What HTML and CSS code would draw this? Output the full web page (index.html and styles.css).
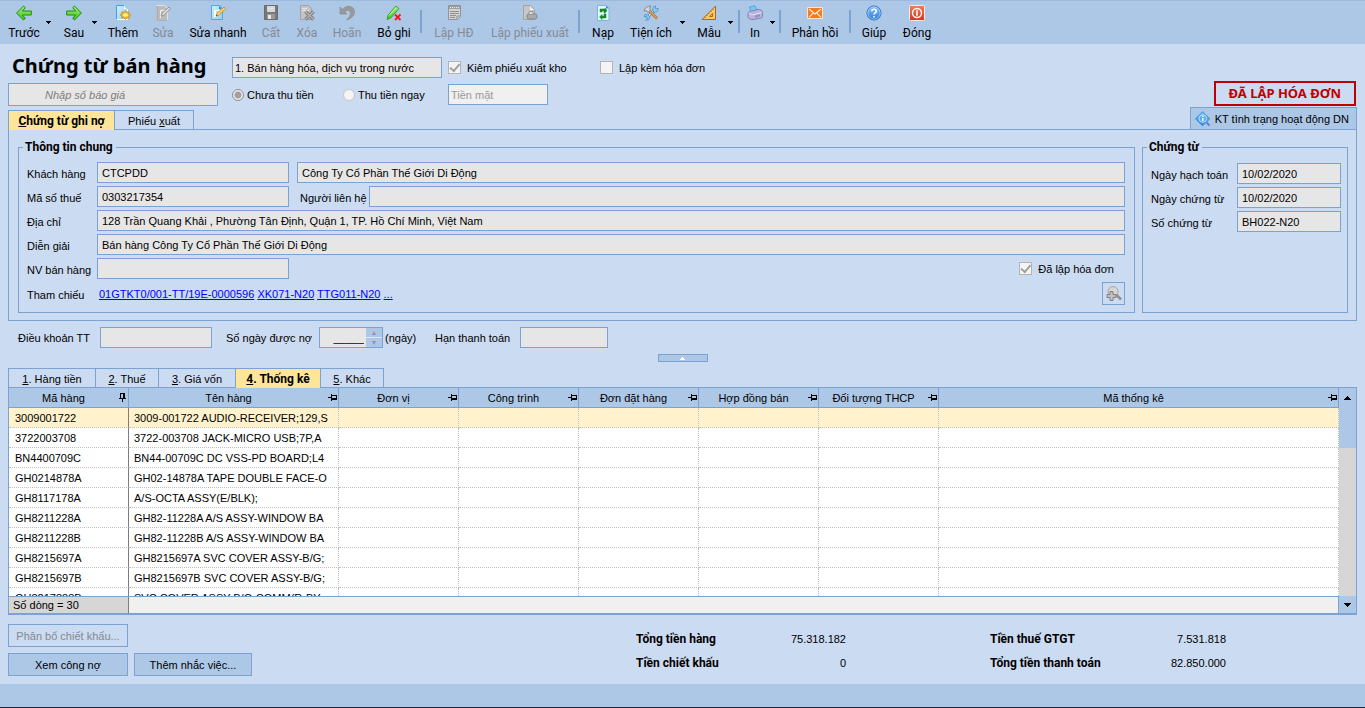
FILE: index.html
```html
<!DOCTYPE html>
<html lang="vi">
<head>
<meta charset="utf-8">
<title>Chứng từ bán hàng</title>
<link rel="stylesheet" href="styles.css">
</head>
<body>
<svg class="defs" aria-hidden="true">
  <defs>
    <linearGradient id="g-green" x1="0" y1="0" x2="0" y2="1"><stop offset="0" stop-color="#a6ec7c"/><stop offset="1" stop-color="#3fc41c"/></linearGradient>
    <linearGradient id="g-blue" x1="0" y1="0" x2="0" y2="1"><stop offset="0" stop-color="#8cc4fa"/><stop offset="1" stop-color="#2a7be0"/></linearGradient>
    <linearGradient id="g-red" x1="0" y1="0" x2="0" y2="1"><stop offset="0" stop-color="#f08058"/><stop offset="1" stop-color="#d8341c"/></linearGradient>
    <linearGradient id="g-page" x1="0" y1="0" x2="1" y2="1"><stop offset="0" stop-color="#d4effd"/><stop offset="1" stop-color="#8fd0f5"/></linearGradient>
    <symbol id="pin" viewBox="0 0 9 7"><path d="M0 3h3V0h1v1h5v5H4v1H3V4H0zM4 2v2h4V2z" fill="#000" fill-rule="evenodd"/></symbol>
    <symbol id="caret" viewBox="0 0 5 3"><path d="M0 0h5v1H4v1H3v1H2V2H1V1H0z" fill="#000"/></symbol>
  </defs>
</svg>

<nav class="toolbar" aria-label="Thanh công cụ">
  <button class="tool"><svg viewBox="0 0 16 16"><path d="M7.500 1 .6 8l6.900 7 1.800-1.700L6.300 10h9V6H6.300l3-3.300z" fill="url(#g-green)" stroke="#159010" stroke-linejoin="round"/></svg><span>Trước</span></button>
  <button class="drop" aria-label="Mở danh sách Trước"><svg><use href="#caret"/></svg></button>
  <button class="tool"><svg viewBox="0 0 16 16"><path d="m8.500 1 6.900 7-6.900 7-1.800-1.700L9.700 10h-9V6h9l-3-3.300z" fill="url(#g-green)" stroke="#159010" stroke-linejoin="round"/></svg><span>Sau</span></button>
  <button class="drop" aria-label="Mở danh sách Sau"><svg><use href="#caret"/></svg></button>
  <button class="tool"><svg viewBox="0 0 16 16"><path d="M1.500.5h8l3 3v11h-11z" fill="url(#g-page)" stroke="#fff"/><path d="M1.500 14.500V.5h7.500l3.500 3.500" fill="none" stroke="#3f9fe0"/><path d="M9 1v3h3z" fill="#fff"/><path d="m10.500 5.500 1.200 1.700 2-.4.1 1.700 2 1.500-1.600 1.400-.1 1.800-2.100-.2-1.500 1.400-1.500-1.400-2.200.2-.1-1.800L5.200 10l1.500-1.500.1-1.700 2.300.4z" fill="#e8b828" stroke="#b88418" stroke-width=".7"/><ellipse cx="10.500" cy="10" rx="2.500" ry="1.800" fill="#fff29c"/></svg><span>Thêm</span></button>
  <button class="tool" disabled><svg viewBox="0 0 16 16"><path d="M1.500.5h8l3 3v11h-11z" fill="#bcbcbc" stroke="#e2e2e2"/><path d="M2 1v14h10" fill="none" stroke="#9a9a9a"/><path d="M5 5h5v1H6v7H5z" fill="#eee"/><path d="m6 11 1.300-3L14 2l1.500 1.600L8.800 10.500z" fill="#d8d8d8" stroke="#8a8a8a" stroke-width=".8"/></svg><span>Sửa</span></button>
  <button class="tool"><svg viewBox="0 0 16 16"><path d="M1.500.5h8l3 3v11h-11z" fill="url(#g-page)" stroke="#49a9ec"/><path d="M9 1v3h3z" fill="#1d86dc"/><path d="M4 5h6v1H6v6H4z" fill="#fff"/><path d="m6 11 1.300-3L14 2l1.500 1.600L8.800 10.500z" fill="#fcd35a" stroke="#c88a20" stroke-width=".8"/><path d="m6 11 .7-1.500.9.9z" fill="#333"/></svg><span>Sửa nhanh</span></button>
  <button class="tool" disabled><svg viewBox="0 0 16 16"><path d="M1.500.5h13v14h-13z" fill="#777" stroke="#6c6c6c"/><path d="M4 1h8v6H4z" fill="#d8d8d8"/><path d="M4 9h8v5H4z" fill="#999"/><path d="M5 10h3v4H5zM5 3h6v1H5z" fill="#e6e6e6"/></svg><span>Cất</span></button>
  <button class="tool" disabled><svg viewBox="0 0 16 16"><path d="M1.500.5h8l3 3v11h-11z" fill="#c4c4c4" stroke="#a2a2a2"/><path d="M3 3h5v1H3zM3 5h7v1H3z" fill="#e8e8e8"/><path d="m6.500 6.500 8 8m0-8-8 8" stroke="#7c7c7c" stroke-width="3.400"/><path d="m6.500 6.500 8 8m0-8-8 8" stroke="#b4b4b4" stroke-width="1.500"/></svg><span>Xóa</span></button>
  <button class="tool" disabled><svg viewBox="0 0 16 16"><path d="M1 2v7h7L5.800 6.800C8 4.600 11.500 5 11.500 8.200c0 2.300-1.500 4.200-4 6.800 4-1 8-3.900 8-8 0-6-7.500-7.800-12-2.700z" fill="#999" stroke="#888" stroke-width=".6"/></svg><span>Hoãn</span></button>
  <button class="tool"><svg viewBox="0 0 16 16"><path d="M1 14.500 2.200 10 10 1l3 2.500-8 9.300z" fill="url(#g-green)" stroke="#2aa018" stroke-width=".9"/><path d="M3 10.500 10.200 2.500" stroke="#d6f8bc"/><path d="m9 9.500 5.500 5.500m0-5.500L9 15" stroke="#f01818" stroke-width="1.800"/></svg><span>Bỏ ghi</span></button>
  <i class="sep"></i>
  <button class="tool" disabled><svg viewBox="0 0 16 16"><path d="M2.500.5h12v11l-3 3h-9z" fill="#d4d4d4" stroke="#929292"/><path d="M3 1h11v3H3z" fill="#a0a0a0"/><path d="M4 6.500h9M4 8.500h9M4 10.500h6M4 12.500h5" stroke="#909090"/><path d="M4 2.500h9" stroke="#eee" stroke-dasharray="1"/><path d="M11 14v-3h3" fill="none" stroke="#909090"/></svg><span>Lập HĐ</span></button>
  <button class="tool" disabled><svg viewBox="0 0 16 16"><path d="M1.500.5h7l4 4v10h-11z" fill="#c6c6c6" stroke="#a4a4a4"/><path d="M8 1v4h4z" fill="#eee"/><rect x="5" y="9" width="10" height="5" rx="2" fill="#aaa" stroke="#858585"/><path d="M7 9V6.500h4V9" fill="#ddd" stroke="#888" stroke-width=".8"/></svg><span>Lập phiếu xuất</span></button>
  <i class="sep"></i>
  <button class="tool"><svg viewBox="0 0 16 16"><path d="M2.500.5H11l3 3v12H2.500z" fill="#e3f4fd" stroke="#7fb4dc"/><path d="M11 .5v3h3z" fill="#368cdc"/><path d="M5 7V4h5V3l2 2.500L10 8H9V6H7v1zM11 9v4H7v1.500L4.500 12 7 9.500V11h2V9z" fill="#0d8c24" stroke="#0d8c24" stroke-width=".5"/></svg><span>Nạp</span></button>
  <button class="tool"><svg viewBox="0 0 16 16"><path d="M3 13.500 11.500 5" stroke="#438fce" stroke-width="3"/><path d="M3 13.500 11.500 5" stroke="#c6ebff" stroke-width="1.300"/><path d="M10 6V2.500L12.500.8V3.500h3L14 6.500l-2.500 1zM5 10l2 2-1.500 3-3 .2L5 13l-2-1.500H1L2 9.500z" fill="#8cc8ee" stroke="#438fce" stroke-width=".7"/><path d="m6 5.500 8 8" stroke="#b6762e" stroke-width="2.800"/><path d="m6.500 6 7 7" stroke="#f2c684"/><path d="M1 6C1.500 3 4 1 8 1L6.500 3l1 2L5 7.500 3.700 5.700z" fill="#d4d8dc" stroke="#7a7a7a" stroke-width=".8"/></svg><span>Tiện ích</span></button>
  <button class="drop" aria-label="Mở danh sách Tiện ích"><svg><use href="#caret"/></svg></button>
  <button class="tool"><svg viewBox="0 0 16 16"><path d="M1 14.500 14.500 1v13.500zM8.500 11.500h3V8.500z" fill="#f9c75e" fill-rule="evenodd" stroke="#a96c1e"/><path d="m3.500 12 .9.900M5.500 10l.9.900M7.500 8l.9.900M9.500 6l.9.900M11.500 4l.9.900" stroke="#7c4c10" stroke-width=".8"/></svg><span>Mẫu</span></button>
  <button class="drop" aria-label="Mở danh sách Mẫu"><svg><use href="#caret"/></svg></button>
  <i class="sep"></i>
  <button class="tool"><svg viewBox="0 0 16 16"><path d="M3.500 6.500 2.500 2 8 .8 10.500 6z" fill="#74c9f4" stroke="#3c98d4" stroke-width=".7"/><path d="M1 8.500C1 7 3 6 5 6l6-1.500c2.500-.3 4.500 1 4.500 3.500v3.500c0 1-1 1.500-2 1.500L6 14.500c-3 0-5-1-5-3z" fill="#b9b5dc" stroke="#7d79b2" stroke-width=".9"/><path d="M2 8.500C4 10 6 10 8 9.300l6.500-1.800" fill="none" stroke="#e5e3f6"/><path d="m8 10.500 5-1.200v2L8 12.500z" fill="#918dc4"/></svg><span>In</span></button>
  <button class="drop" aria-label="Mở danh sách In"><svg><use href="#caret"/></svg></button>
  <i class="sep"></i>
  <button class="tool"><svg viewBox="0 0 16 16"><path d="M.5 2.500h15v11H.5z" fill="#f47c20" stroke="#ffe3c4"/><path d="m2 4 6 5 6-5M2 12.500 6.300 7.800M14 12.500 9.700 7.800" fill="none" stroke="#fff3e2" stroke-width="1.100"/></svg><span>Phản hồi</span></button>
  <i class="sep"></i>
  <button class="tool"><svg viewBox="0 0 16 16"><circle cx="8" cy="8" r="7" fill="url(#g-blue)" stroke="#1c69c4"/><circle cx="8" cy="8" r="6.200" fill="none" stroke="#b9dcff" stroke-width=".7"/><path d="M5.800 6.200C5.800 3.600 10.300 3.600 10.300 6.200 10.300 7.800 8 7.800 8 9.600M8 11v1.600" fill="none" stroke="#fff" stroke-width="1.600"/></svg><span>Giúp</span></button>
  <button class="tool"><svg viewBox="0 0 16 16"><rect x=".5" y=".5" width="15" height="15" rx="1" fill="url(#g-red)" stroke="#ffe9e0"/><circle cx="8" cy="8" r="4.500" fill="none" stroke="#fff" stroke-width="1.400"/><path d="M8 5.200v5.600" stroke="#fff" stroke-width="1.600"/></svg><span>Đóng</span></button>
</nav>

<main class="page">
  <header class="head">
    <div class="head-left">
      <h1>Chứng từ bán hàng</h1>
      <input class="field quote" type="text" placeholder="Nhập số báo giá" aria-label="Số báo giá" readonly>
    </div>
    <div class="head-mid">
      <div class="kind">
        <select class="field" aria-label="Loại chứng từ"><option>1. Bán hàng hóa, dịch vụ trong nước</option></select>
        <label class="tick"><input type="checkbox" checked>Kiêm phiếu xuất kho</label>
        <label class="tick"><input type="checkbox">Lập kèm hóa đơn</label>
      </div>
      <div class="pay">
        <label class="tick dot"><input type="radio" name="pay" checked>Chưa thu tiền</label>
        <label class="tick dot"><input type="radio" name="pay">Thu tiền ngay</label>
        <select class="field cash" aria-label="Hình thức thanh toán"><option>Tiền mặt</option></select>
      </div>
    </div>
    <strong class="badge">ĐÃ LẬP HÓA ĐƠN</strong>
  </header>

  <div class="tab-row">
    <div class="tabs" role="tablist">
      <button class="tab active wide" role="tab"><u>C</u>hứng từ ghi nợ</button>
      <button class="tab mid" role="tab">Phiếu <u>x</u>uất</button>
    </div>
    <button class="check-dn"><svg viewBox="0 0 16 16"><path d="m7.500.8 7.200 7-7.200 7L.5 7.800z" fill="url(#g-blue)" stroke="#2e93da"/><circle cx="7.800" cy="7.600" r="3.800" fill="#58b0ee" stroke="#b8e2ff"/><path d="M7.800 7v3M7.800 4.800v1.200" stroke="#fff" stroke-width="1.500"/><path d="m11.500 11.500 3 3" stroke="#6f77d8" stroke-width="2"/></svg>KT tình trạng hoạt động DN</button>
  </div>

  <section class="panel">
    <fieldset class="general">
      <legend>Thông tin chung</legend>
      <div class="row"><label for="kh">Khách hàng</label><input id="kh" class="field code" value="CTCPDD" readonly><input class="field grow" value="Công Ty Cổ Phần Thế Giới Di Động" aria-label="Tên khách hàng" readonly></div>
      <div class="row"><label for="mst">Mã số thuế</label><input id="mst" class="field code" value="0303217354" readonly><label for="nlh" class="contact">Người liên hệ</label><input id="nlh" class="field grow" readonly></div>
      <div class="row"><label for="dc">Địa chỉ</label><input id="dc" class="field grow" value="128 Trần Quang Khải , Phường Tân Định, Quận 1, TP. Hồ Chí Minh, Việt Nam" readonly></div>
      <div class="row"><label for="dg">Diễn giải</label><input id="dg" class="field grow" value="Bán hàng Công Ty Cổ Phần Thế Giới Di Động" readonly></div>
      <div class="row"><label for="nv">NV bán hàng</label><input id="nv" class="field code" readonly><label class="tick issued"><input type="checkbox" checked>Đã lập hóa đơn</label></div>
      <div class="row"><span class="cap">Tham chiếu</span><span class="links"><a href="#">01GTKT0/001-TT/19E-0000596</a> <a href="#">XK071-N20</a> <a href="#">TTG011-N20</a> <a href="#">...</a></span>
        <button class="find" aria-label="Tìm chứng từ tham chiếu"><svg viewBox="0 0 16 16"><circle cx="7" cy="5.500" r="5" fill="#d6d6d6" stroke="#a4a4a4"/><path d="m10.500 9 4.500 4.500" stroke="#909090" stroke-width="2.600"/><path d="M4 5.500h3v3h3v3H7v3H4v-3H1v-3h3z" fill="#c0c0c0" stroke="#808080"/></svg></button></div>
    </fieldset>
    <fieldset class="voucher">
      <legend>Chứng từ</legend>
      <div class="row"><label for="nht">Ngày hạch toán</label><input id="nht" class="field grow" value="10/02/2020" readonly></div>
      <div class="row"><label for="nct">Ngày chứng từ</label><input id="nct" class="field grow" value="10/02/2020" readonly></div>
      <div class="row"><label for="sct">Số chứng từ</label><input id="sct" class="field grow" value="BH022-N20" readonly></div>
    </fieldset>
  </section>

  <div class="terms">
    <label for="dk">Điều khoản TT</label><input id="dk" class="field term-code" readonly>
    <label for="sn">Số ngày được nợ</label>
    <span class="spin"><input id="sn" value="_____" readonly><span class="steps"><button aria-label="Tăng">▴</button><button aria-label="Giảm">▾</button></span></span>
    <span class="unit">(ngày)</span>
    <label for="ht">Hạn thanh toán</label><input id="ht" class="field due" readonly>
  </div>
  <button class="collapse" aria-label="Thu gọn"><svg viewBox="0 0 5 3"><path d="M2 0h1v1h1v1h1v1H0V2h1V1h1z" fill="#fff"/></svg></button>

  <div class="tabs lower" role="tablist">
    <button class="tab t1" role="tab"><u>1</u>. Hàng tiền</button>
    <button class="tab t2" role="tab"><u>2</u>. Thuế</button>
    <button class="tab t3" role="tab"><u>3</u>. Giá vốn</button>
    <button class="tab t4 active" role="tab"><u>4</u>. Thống kê</button>
    <button class="tab t2" role="tab"><u>5</u>. Khác</button>
  </div>

  <section class="grid">
    <div class="grid-main">
      <div class="grid-view">
        <table>
          <colgroup><col class="c-code"><col class="c-name"><col class="c-std"><col class="c-std"><col class="c-std"><col class="c-std"><col class="c-std"><col></colgroup>
          <thead><tr>
            <th><div><span>Mã hàng</span><svg class="pin down"><use href="#pin"/></svg></div></th>
            <th><div><span>Tên hàng</span><svg class="pin"><use href="#pin"/></svg></div></th>
            <th><div><span>Đơn vị</span><svg class="pin"><use href="#pin"/></svg></div></th>
            <th><div><span>Công trình</span><svg class="pin"><use href="#pin"/></svg></div></th>
            <th><div><span>Đơn đặt hàng</span><svg class="pin"><use href="#pin"/></svg></div></th>
            <th><div><span>Hợp đồng bán</span><svg class="pin"><use href="#pin"/></svg></div></th>
            <th><div><span>Đối tượng THCP</span><svg class="pin"><use href="#pin"/></svg></div></th>
            <th><div><span>Mã thống kê</span><svg class="pin"><use href="#pin"/></svg></div></th>
          </tr></thead>
          <tbody>
            <tr class="current"><td>3009001722</td><td>3009-001722 AUDIO-RECEIVER;129,S</td><td></td><td></td><td></td><td></td><td></td><td></td></tr>
            <tr><td>3722003708</td><td>3722-003708 JACK-MICRO USB;7P,A</td><td></td><td></td><td></td><td></td><td></td><td></td></tr>
            <tr><td>BN4400709C</td><td>BN44-00709C DC VSS-PD BOARD;L4</td><td></td><td></td><td></td><td></td><td></td><td></td></tr>
            <tr><td>GH0214878A</td><td>GH02-14878A TAPE DOUBLE FACE-O</td><td></td><td></td><td></td><td></td><td></td><td></td></tr>
            <tr><td>GH8117178A</td><td>A/S-OCTA ASSY(E/BLK);</td><td></td><td></td><td></td><td></td><td></td><td></td></tr>
            <tr><td>GH8211228A</td><td>GH82-11228A A/S ASSY-WINDOW BA</td><td></td><td></td><td></td><td></td><td></td><td></td></tr>
            <tr><td>GH8211228B</td><td>GH82-11228B A/S ASSY-WINDOW BA</td><td></td><td></td><td></td><td></td><td></td><td></td></tr>
            <tr><td>GH8215697A</td><td>GH8215697A SVC COVER ASSY-B/G;</td><td></td><td></td><td></td><td></td><td></td><td></td></tr>
            <tr><td>GH8215697B</td><td>GH8215697B SVC COVER ASSY-B/G;</td><td></td><td></td><td></td><td></td><td></td><td></td></tr>
            <tr><td>GH8217888B</td><td>SVC COVER ASSY-B/G-COMM(R-BY</td><td></td><td></td><td></td><td></td><td></td><td></td></tr>
          </tbody>
        </table>
      </div>
      <div class="summary"><span>Số dòng = 30</span></div>
    </div>
    <div class="scroll">
      <button aria-label="Cuộn lên"><svg viewBox="0 0 7 4"><path d="M3 0h1v1h1v1h1v1h1v1H0V3h1V2h1V1h1z"/></svg></button>
      <div class="thumb"></div>
      <button class="last" aria-label="Cuộn xuống"><svg viewBox="0 0 7 4"><path d="M0 0h7v1H6v1H5v1H4v1H3V3H2V2H1V1H0z"/></svg></button>
    </div>
  </section>

  <section class="bottom">
    <div class="actions">
      <button class="act" disabled>Phân bổ chiết khấu...</button>
      <button class="act first">Xem công nợ</button>
      <button class="act">Thêm nhắc việc...</button>
    </div>
    <dl class="totals">
      <dt>Tổng tiền hàng</dt><dd>75.318.182</dd><dt class="second">Tiền thuế GTGT</dt><dd>7.531.818</dd>
      <dt>Tiền chiết khấu</dt><dd>0</dd><dt class="second">Tổng tiền thanh toán</dt><dd>82.850.000</dd>
    </dl>
  </section>
</main>
<footer class="status"></footer>
</body>
</html>
```
FILE: styles.css
```css
:root {
  --bg: #cbdbf1;
  --bar: #adc7e7;
  --line: #7ba2d1;
  --field: #e6e6e6;
  --yellow: #ffe599;
}

* { box-sizing: border-box; }

body {
  margin: 0;
  height: 100vh;
  min-height: 620px;
  display: flex;
  flex-direction: column;
  background: var(--bg);
  color: #000;
  font: 11px/16px "Liberation Sans", Arial, sans-serif;
}

button, input, select { font: inherit; color: inherit; margin: 0; }
button { padding: 0; border: 0; background: none; white-space: nowrap; }
label { white-space: nowrap; }
.defs { position: absolute; width: 0; height: 0; }

/* Toolbar */
.toolbar {
  display: grid;
  grid-template-columns: 40px 14px 32px 14px 38px 42px 68px 38px 34px 46px 48px 6px 60px 92px 6px 42px 54px 14px 34px 10px 6px 26px 9px 6px 64px 6px 42px 44px;
  flex: none;
  height: 44px;
  padding: 4px 4px 3px;
  border-top: 1px solid #9bbadd;
  background: var(--bar);
  font-family: Roboto, "Open Sans", sans-serif;
  font-size: 12px;
}
.tool { display: flex; flex-direction: column; align-items: center; gap: 4px; }
.tool svg { width: 16px; height: 16px; }
.tool:disabled { color: #858b94; }
.drop { display: flex; padding: 16px 0 0 2px; }
.drop svg { width: 5px; height: 3px; }
.sep { width: 2px; height: 23px; margin: 5px 0 0 2px; background: var(--line); }

/* Main area */
.page { display: flex; flex-direction: column; flex: 1; min-height: 0; padding: 0 8px; }

.field {
  height: 21px;
  min-width: 0;
  padding: 0 5px 0 4px;
  border: 1px solid var(--line);
  border-radius: 0;
  background: var(--field);
  outline: 0;
  appearance: none;
}
select.field { padding: 0 2px; }
.grow { flex: 1; }

.head { display: flex; align-items: flex-end; padding: 10px 1px 1px 0; }
.head-left { width: 210px; margin-right: 14px; }
h1 {
  margin: 0;
  padding: 0 0 5px 4px;
  font: bold 20px/24px "Noto Sans", "Open Sans", sans-serif;
  white-space: nowrap;
}
.quote { display: block; width: 100%; height: 23px; padding-left: 36px; font-style: italic; }
.quote::placeholder { color: #7d7d7d; opacity: 1; }
.head-mid { display: flex; flex-direction: column; gap: 6px; flex: 1; padding-bottom: 1px; }
.kind, .pay { display: grid; align-items: center; }
.kind { grid-template-columns: 210px 146px auto; column-gap: 6px; }
.pay { grid-template-columns: 105px 99px 100px; column-gap: 6px; }
.cash { background: #f0f0f0; color: #9a9a9a; }

.tick { display: flex; align-items: center; gap: 6px; }
.tick input {
  flex: none;
  display: grid;
  place-items: center;
  appearance: none;
  width: 13px;
  height: 13px;
  border: 1px solid #b4b4b4;
  background: #f4f4f4;
}
.tick input[type="checkbox"]:checked::before {
  content: "";
  width: 4px;
  height: 8px;
  border: solid #a0a0a0;
  border-width: 0 2px 2px 0;
  transform: rotate(40deg) translate(-1px, -1px);
}
.dot { gap: 3px; }
.dot input { width: 12px; height: 12px; border-radius: 50%; border-color: #c8c8c8; }
.dot input:checked { border-color: #8c8c8c; background: radial-gradient(#a0a0a0 0 3px, #eee 4px); }

.badge {
  padding: 0 13px;
  border: 2px solid #c00000;
  color: #c00000;
  font: bold 13px/21px "Noto Sans", "Open Sans", sans-serif;
  white-space: nowrap;
}

/* Tabs */
.tab-row { position: relative; display: flex; justify-content: space-between; align-items: flex-end; margin-bottom: -1px; }
.tabs { display: flex; }
.tab { height: 20px; margin-right: -1px; border: 1px solid var(--line); border-bottom: 0; }
.tab.active { background: var(--yellow); font: bold 12px/16px Roboto, sans-serif; }
.wide { width: 107px; }
.mid { width: 80px; }
.t1 { width: 88px; }
.t2 { width: 64px; }
.t3 { width: 78px; }
.t4 { width: 86px; }
.check-dn {
  display: flex;
  align-items: center;
  gap: 4px;
  height: 22px;
  margin-bottom: 1px;
  padding: 0 7px 0 4px;
  border: 1px solid var(--line);
  border-bottom: 0;
  background: var(--bar);
}
.check-dn svg { width: 16px; height: 16px; }

/* Document panel */
.panel {
  display: flex;
  gap: 7px;
  padding: 9px 8px 7px 9px;
  border: 1px solid var(--line);
}
fieldset {
  display: flex;
  flex-direction: column;
  gap: 3px;
  min-width: 0;
  margin: 0;
  padding: 7px 9px 7px 8px;
  border: 1px solid var(--line);
}
legend { margin-left: -4px; padding: 0 3px 0 2px; font: bold 12px/16px Roboto, sans-serif; }
.general { flex: 1; }
.voucher { width: 206px; padding: 8px 6px 7px 8px; }
.row { display: flex; align-items: center; }
.row > label:first-child, .cap { width: 70px; padding-top: 2px; }
.voucher .row > label:first-child { width: 86px; }
.code { width: 192px; margin-right: 8px; }
.row > .contact { width: 72px; padding: 2px 0 0 3px; }
.issued { margin-left: auto; padding-right: 11px; }
.links { flex: 1; padding-left: 2px; }
a { color: #0000ff; }
.find { display: grid; place-items: center; width: 23px; height: 23px; border: 1px solid var(--line); }
.find svg { width: 16px; height: 16px; }

/* Payment terms */
.terms { display: flex; align-items: center; padding: 6px 0 6px 10px; }
.terms > label { width: 93px; }
.terms > label:first-child { width: 82px; }
.term-code { width: 112px; margin-right: 14px; }
.spin { display: flex; width: 64px; height: 21px; border: 1px solid var(--line); background: var(--field); }
.spin input { flex: 1; width: 46px; padding: 0 2px; border: 0; background: none; text-align: right; outline: 0; }
.steps { display: grid; gap: 1px; width: 17px; }
.steps button { overflow: hidden; background: var(--bar); color: #a08aa8; font: 8px/8px "DejaVu Sans", sans-serif; }
.unit { width: 52px; padding-left: 2px; }
.terms > .unit + label { width: 85px; }
.due { width: 88px; }
.collapse {
  display: grid;
  place-items: center;
  align-self: center;
  flex: none;
  width: 50px;
  height: 8px;
  border: 1px solid var(--line);
  background: var(--bar);
}
.collapse svg { width: 5px; height: 3px; }
.lower { position: relative; flex: none; margin: 6px 0 -1px; }

/* Item grid */
.grid { display: flex; flex: 1; min-height: 0; border: 1px solid var(--line); border-bottom-width: 2px; }
.grid-main { display: flex; flex-direction: column; flex: 1; min-width: 0; }
.grid-view { flex: 1; min-height: 0; overflow: hidden; background: #fff; }
table { width: 100%; table-layout: fixed; border-collapse: separate; border-spacing: 0; }
.c-code, .c-std { width: 120px; }
.c-name { width: 210px; }
th { height: 20px; padding: 0; border: solid var(--line); border-width: 0 1px 1px 0; background: var(--bar); font-weight: normal; }
th div { display: flex; align-items: center; padding-right: 1px; }
th span { flex: 1; text-align: center; }
.pin { width: 9px; height: 7px; }
.down { transform: rotate(-90deg); }
td {
  height: 20px;
  padding: 0 5px;
  border: dotted #c0c0c0;
  border-width: 0 1px 1px 0;
  white-space: nowrap;
  overflow: hidden;
}
td:first-child { padding-left: 6px; border-right: 1px solid #7d7d7d; }
.current td { background: #fff2cc; }
.summary { display: flex; flex: none; height: 17px; border-top: 1px solid var(--line); border-right: 1px solid var(--line); background: #f0f0f0; }
.summary span { width: 120px; padding-left: 4px; border-right: 1px solid #7d7d7d; background: #d6d6d6; }
.scroll { display: flex; flex-direction: column; width: 17px; background: #d6d6d6; }
.scroll button { display: grid; place-items: center; height: 20px; background: var(--bar); }
.scroll .last { height: 17px; margin-top: auto; }
.scroll svg { width: 7px; height: 4px; }
.thumb { height: 40px; background: var(--bar); }

/* Actions and totals */
.bottom { display: flex; flex: none; padding: 9px 0 8px; }
.actions { display: grid; grid-template-columns: 120px 118px; gap: 6px; width: 628px; flex: none; }
.act { height: 23px; border: 1px solid var(--line); background: var(--bar); }
.act:disabled { background: none; color: #85898f; }
.act.first { grid-column: 1; }
.totals {
  display: grid;
  grid-template-columns: 110px 100px 254px 126px;
  grid-auto-rows: 16px;
  gap: 8px 0;
  margin: 7px 0 0;
}
.totals dt { font: bold 12px/16px Roboto, sans-serif; white-space: nowrap; }
.totals dt.second { padding-left: 144px; }
.totals dd { margin: 0; text-align: right; }

.status { flex: none; height: 24px; background: var(--bar); border-bottom: 1px solid #1c2836; }
```
